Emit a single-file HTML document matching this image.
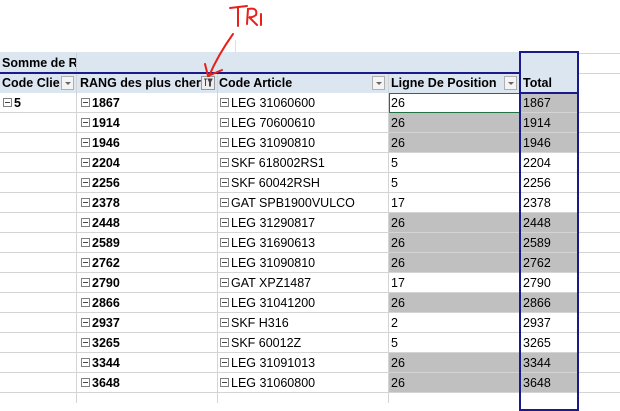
<!DOCTYPE html>
<html><head><meta charset="utf-8"><style>
body{margin:0;width:620px;height:400px;background:#fff;overflow:hidden;position:relative;font-family:"Liberation Sans",Arial,sans-serif;font-size:12.5px;color:#000}
.a{position:absolute;box-sizing:border-box}
.t{position:absolute;white-space:nowrap;overflow:hidden;line-height:20px}
.b{font-weight:bold}
.m{display:inline-block;width:7px;height:7px;border:1px solid #808080;margin-right:2px;position:relative;top:0px;vertical-align:0px}
.m:after{content:"";position:absolute;left:1px;top:3px;width:5px;height:1px;background:#444}
.dd{position:absolute;width:13px;height:14px;border:1px solid #b0b0b0;background:#f4f4f4;box-sizing:border-box}
.dd:after{content:"";position:absolute;left:3px;top:5px;border-left:3px solid transparent;border-right:3px solid transparent;border-top:3px solid #666}
</style></head><body>
<div class="a" style="left:0;top:52px;width:520px;height:41px;background:#dce6f1"></div>
<div class="a" style="left:520px;top:52px;width:58px;height:41px;background:#dce6f1"></div>
<div id="rows"></div>
<div class="a" style="left:0;top:72px;width:521px;height:2px;background:#1a1a8c"></div>
<div class="a" style="left:519px;top:51px;width:60px;height:360px;border:2px solid #1a1a8c"></div>
<div class="a" style="left:519px;top:92px;width:60px;height:2px;background:#1a1a8c"></div>
<div class="t b" style="left:2px;top:53px;width:74px;">Somme de R</div>
<div class="t b" style="left:2px;top:73px;width:59px">Code Clie</div>
<div class="dd" style="left:61px;top:76px"></div>
<div class="t b" style="left:80px;top:73px;width:121px">RANG des plus cher</div>
<div class="a" style="left:201px;top:76px;width:14px;height:14px;border:1px solid #999;background:#eee"></div>
<svg class="a" style="left:203px;top:78px" width="10" height="10"><path d="M1 1h3M2.5 1v7M5 1h4l-1.5 3v4h-1v-4z" stroke="#444" fill="#444" stroke-width="1"/></svg>
<div class="t b" style="left:219px;top:73px">Code Article</div>
<div class="dd" style="left:372px;top:76px"></div>
<div class="t b" style="left:391px;top:73px">Ligne De Position</div>
<div class="dd" style="left:504px;top:76px"></div>
<div class="t b" style="left:523px;top:73px">Total</div>
<svg class="a" style="left:0;top:0" width="620" height="100">
<g stroke="#e8201a" stroke-width="2" fill="none" stroke-linecap="round">
<path d="M230 8 L247 6 M238 7 L238 26"/>
<path d="M247 24 L248 9 Q258 7 256 15 Q252 18 249 17 L257 25"/>
<path d="M261 14 L261 25"/>
<path d="M233 34 Q218 55 209 76"/>
<path d="M205 64 L208 76 L222 70"/>
</g></svg>
<script>
var rows=[["5","1867","LEG 31060600","26"],["","1914","LEG 70600610","26"],["","1946","LEG 31090810","26"],["","2204","SKF 618002RS1","5"],["","2256","SKF 60042RSH","5"],["","2378","GAT SPB1900VULCO","17"],["","2448","LEG 31290817","26"],["","2589","LEG 31690613","26"],["","2762","LEG 31090810","26"],["","2790","GAT XPZ1487","17"],["","2866","LEG 31041200","26"],["","2937","SKF H316","2"],["","3265","SKF 60012Z","5"],["","3344","LEG 31091013","26"],["","3648","LEG 31060800","26"]];
var h="";
[53,73].forEach(function(y){h+='<div class="a" style="left:578px;top:'+y+'px;width:42px;height:1px;background:#d4d4d4"></div>';});
h+='<div class="a" style="left:76px;top:53px;width:1px;height:20px;background:#c8d0dc"></div>';
h+='<div class="a" style="left:235px;top:40px;width:1px;height:13px;background:#e0e0e0"></div>';
for(var i=0;i<rows.length;i++){var y=93+i*20,r=rows[i],g=r[3]=="26";
h+='<div class="a" style="left:0;top:'+(y+19)+'px;width:620px;height:1px;background:#d4d4d4"></div>';
if(g){if(i>0)h+='<div class="a" style="left:389px;top:'+y+'px;width:130px;height:19px;background:#c0c0c0"></div>';h+='<div class="a" style="left:521px;top:'+y+'px;width:56px;height:19px;background:#c0c0c0"></div>';}
if(r[0])h+='<div class="t b" style="left:3px;top:'+y+'px"><span class="m"></span>'+r[0]+'</div>';
h+='<div class="t b" style="left:81px;top:'+y+'px"><span class="m"></span>'+r[1]+'</div>';
h+='<div class="t" style="left:220px;top:'+y+'px"><span class="m"></span>'+r[2]+'</div>';
h+='<div class="t" style="left:391px;top:'+y+'px">'+r[3]+'</div>';
h+='<div class="t" style="left:523px;top:'+y+'px">'+r[1]+'</div>';}
[76,217,388].forEach(function(x){h+='<div class="a" style="left:'+x+'px;top:73px;width:1px;height:330px;background:#d4d4d4"></div>';});
h+='<div class="a" style="left:389px;top:93px;width:131px;height:20px;border:1px solid #217346;background:transparent"></div>';
document.getElementById("rows").innerHTML=h;
</script>
</body></html>
